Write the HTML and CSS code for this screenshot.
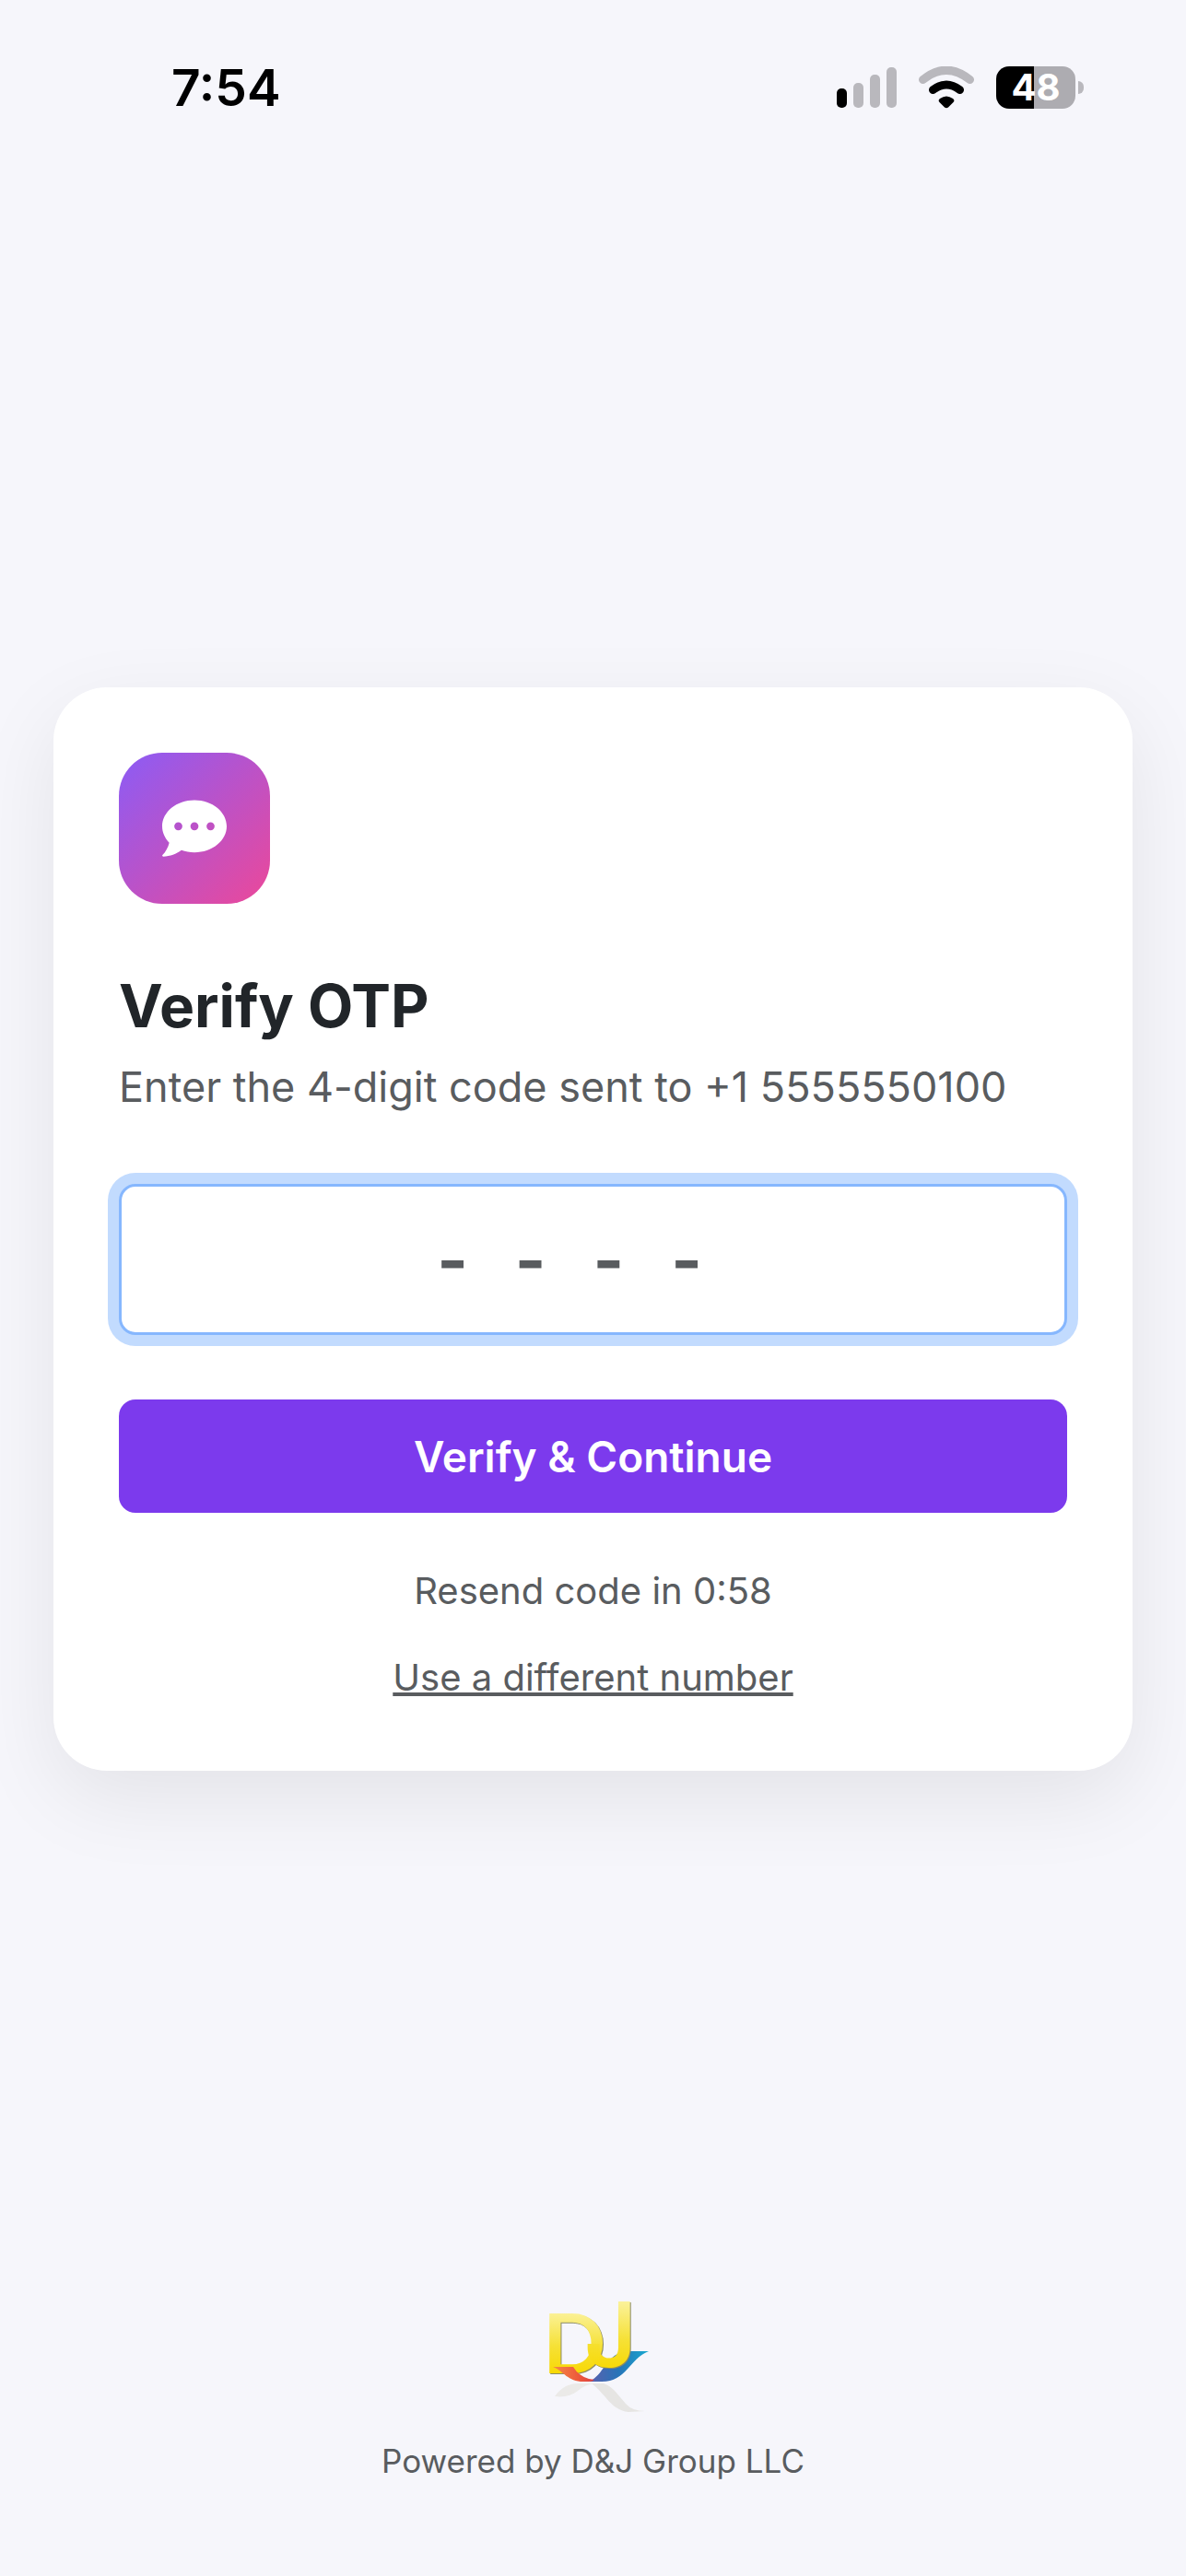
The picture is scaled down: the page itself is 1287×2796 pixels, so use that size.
FILE: index.html
```html
<!DOCTYPE html>
<html lang="en">
<head>
  <meta charset="UTF-8">
  <meta name="viewport" content="width=device-width, initial-scale=1.0">
  <title>Verify OTP</title>
  <link rel="stylesheet" href="styles.css">
</head>
<body>

  <div class="status-bar">
    <span class="time">7:54</span>
    <div class="status-icons">
      <svg width="65" height="46" viewBox="0 0 65 46" aria-hidden="true">
        <rect x="0" y="24" width="11" height="21" rx="5" fill="#000"/>
        <rect x="18" y="18" width="11" height="27" rx="5" fill="#b9b8bd"/>
        <rect x="36" y="9" width="11" height="36" rx="5" fill="#b9b8bd"/>
        <rect x="54" y="1" width="11" height="44" rx="5" fill="#b9b8bd"/>
      </svg>
      <svg width="60" height="46" viewBox="0 0 60 46" aria-hidden="true">
        <path d="M4.5 14.500Q30-6 55.500 14.500" fill="none" stroke="#b9b8bd" stroke-width="9" stroke-linecap="round"/>
        <path d="M15.500 25.500Q30 14.500 44.500 25.500" fill="none" stroke="#000" stroke-width="9" stroke-linecap="round"/>
        <path d="M23 35Q30 30 37 35Q39.500 37 37.500 39L32 44.500Q30 46 28 44.500L22.500 39Q20.500 37 23 35Z" fill="#000"/>
      </svg>
      <div class="battery">
        <div class="battery-body">48</div>
        <div class="battery-cap"></div>
      </div>
    </div>
  </div>

  <main>
    <form class="card" onsubmit="return false;">
      <div class="card-icon">
        <svg width="70" height="70" viewBox="0 0.5 16 16" aria-hidden="true">
          <path fill="#fff" fill-rule="evenodd" d="M8 1.500c4.420 0 8 2.910 8 6.500s-3.580 6.500-8 6.500c-1.150 0-2.240-.2-3.230-.550C3.500 14.900 2 15.500.25 15.500c-.2 0-.3-.2-.17-.350C.8 14.400 1.500 13.200 1.750 12.080C.65 10.960 0 9.540 0 8c0-3.590 3.580-6.500 8-6.500zM5 8a1 1 0 1 0-2 0 1 1 0 0 0 2 0zm4 0a1 1 0 1 0-2 0 1 1 0 0 0 2 0zm4 0a1 1 0 1 0-2 0 1 1 0 0 0 2 0z"/>
        </svg>
      </div>
      <h1>Verify OTP</h1>
      <p class="subtitle">Enter the 4-digit code sent to +1 5555550100</p>
      <input type="text" id="otp" name="otp" class="otp-input" placeholder="----" maxlength="4" inputmode="numeric" aria-label="4-digit code">
      <button type="submit" class="btn">Verify &amp; Continue</button>
      <p class="resend">Resend code in 0:58</p>
      <a href="#" class="change-number">Use a different number</a>
    </form>
  </main>

  <footer>
    <svg class="logo" width="150" height="150" viewBox="0 0 150 150" role="img" aria-label="D&amp;J Group">
      <defs>
        <linearGradient id="gold" x1="0" y1="0" x2="0" y2="1">
          <stop offset="0.2" stop-color="#fbf29c"/>
          <stop offset="0.55" stop-color="#f6e136"/>
          <stop offset="0.85" stop-color="#f8d800"/>
        </linearGradient>
        <linearGradient id="red" x1="0" y1="0" x2="1" y2="0">
          <stop offset="0" stop-color="#f58a45"/>
          <stop offset="0.6" stop-color="#ee5a3c"/>
          <stop offset="1" stop-color="#dc4040"/>
        </linearGradient>
        <linearGradient id="blue" x1="0" y1="0" x2="1" y2="0">
          <stop offset="0" stop-color="#5d5fae"/>
          <stop offset="0.5" stop-color="#2874b8"/>
          <stop offset="1" stop-color="#18a9cf"/>
        </linearGradient>
      </defs>
      <!-- reflection under the swoosh -->
      <path d="M73 109H86C96 112 102 122 110 131Q117 139 131 139L113 140C94 138 88 120 73 109Z" fill="#e6e5e3"/>
      <path d="M33 123Q43 109 58 109H76Q66 110 58 117Q48 125 33 123Z" fill="#ebeae8"/>
      <path d="M69 107C87 102 88 74 114 74H135C114 82 111 107 84 107Z" fill="url(#blue)"/>
      <g class="logo-letters">
        <text class="logo-d" x="20" y="98">D</text>
        <text class="logo-j" x="65" y="91">J</text>
      </g>
      <path d="M31 91H53Q59 101 70 104L76 105Q74 107 70 107H64C47 107 43 96 31 91Z" fill="url(#red)"/>
    </svg>
    <p>Powered by D&amp;J Group LLC</p>
  </footer>

</body>
</html>
```
FILE: styles.css
```css
* {
  box-sizing: border-box;
  margin: 0;
  padding: 0;
}

body {
  display: flex;
  flex-direction: column;
  min-height: 100vh;
  background-color: #f6f6fb;
  color: #595c5f;
  font-family: Inter, "Liberation Sans", sans-serif;
}

/* status bar */
.status-bar {
  display: flex;
  justify-content: space-between;
  align-items: center;
  height: 190px;
  padding: 0 111px 0 186px;
}

.time {
  color: #000;
  font-size: 55px;
  font-weight: 600;
  line-height: 64px;
}

.status-icons {
  display: flex;
  align-items: center;
  gap: 24px;
}

.battery {
  display: flex;
  align-items: center;
  gap: 3px;
}

.battery-body {
  width: 86px;
  height: 46px;
  border-radius: 14px;
  background: linear-gradient(to right, #000 48%, #adacb1 48%);
  color: #fff;
  font-size: 40px;
  font-weight: 700;
  line-height: 46px;
  text-align: center;
}

.battery-cap {
  width: 6px;
  height: 14px;
  border-radius: 0 6px 6px 0;
  background-color: #b9b8bd;
}

/* card */
main {
  flex: 1;
  display: flex;
  align-items: center;
  padding: 0 58px;
}

.card {
  display: flex;
  flex-direction: column;
  width: 100%;
  padding: 71px;
  border-radius: 58px;
  background-color: #fff;
  box-shadow: 0 30px 90px rgba(0, 0, 0, 0.08);
}

.card-icon {
  display: flex;
  align-items: center;
  justify-content: center;
  width: 164px;
  height: 164px;
  margin-bottom: 72px;
  border-radius: 47px;
  background: linear-gradient(135deg, #8b5cf6, #ec4899);
}

h1 {
  margin-bottom: 14px;
  color: #212529;
  font-size: 64px;
  font-weight: 700;
  line-height: 78px;
}

.subtitle {
  margin-bottom: 70px;
  font-size: 45px;
  line-height: 70px;
}

.otp-input {
  width: 100%;
  height: 164px;
  margin-bottom: 70px;
  border: 3px solid #86b7fe;
  border-radius: 18px;
  outline: none;
  background-color: #fff;
  box-shadow: 0 0 0 12px #c2dbfe;
  color: #212529;
  font-family: inherit;
  font-size: 72px;
  font-weight: 700;
  letter-spacing: 51px;
  text-align: center;
}

.otp-input::placeholder {
  color: #595c5f;
}

.btn {
  height: 123px;
  margin-bottom: 55px;
  border: none;
  border-radius: 18px;
  background-color: #7c3aed;
  color: #fff;
  font-family: inherit;
  font-size: 46px;
  font-weight: 600;
}

.resend {
  margin-bottom: 34px;
  font-size: 40px;
  line-height: 60px;
  text-align: center;
}

.change-number {
  align-self: center;
  color: inherit;
  font-size: 40px;
  line-height: 60px;
}

/* footer */
footer {
  display: flex;
  flex-direction: column;
  align-items: center;
  height: 318px;
  font-size: 35px;
  line-height: 52px;
}

.logo {
  margin-bottom: 17px;
  overflow: visible;
}

.logo-letters {
  fill: url(#gold);
  filter: drop-shadow(1px 1px 0 #8b8b66);
}

.logo-d {
  font-family: Lato, sans-serif;
  font-size: 90px;
  font-weight: 700;
}

.logo-j {
  font-family: Inter, sans-serif;
  font-size: 98px;
  font-weight: 600;
}
```
